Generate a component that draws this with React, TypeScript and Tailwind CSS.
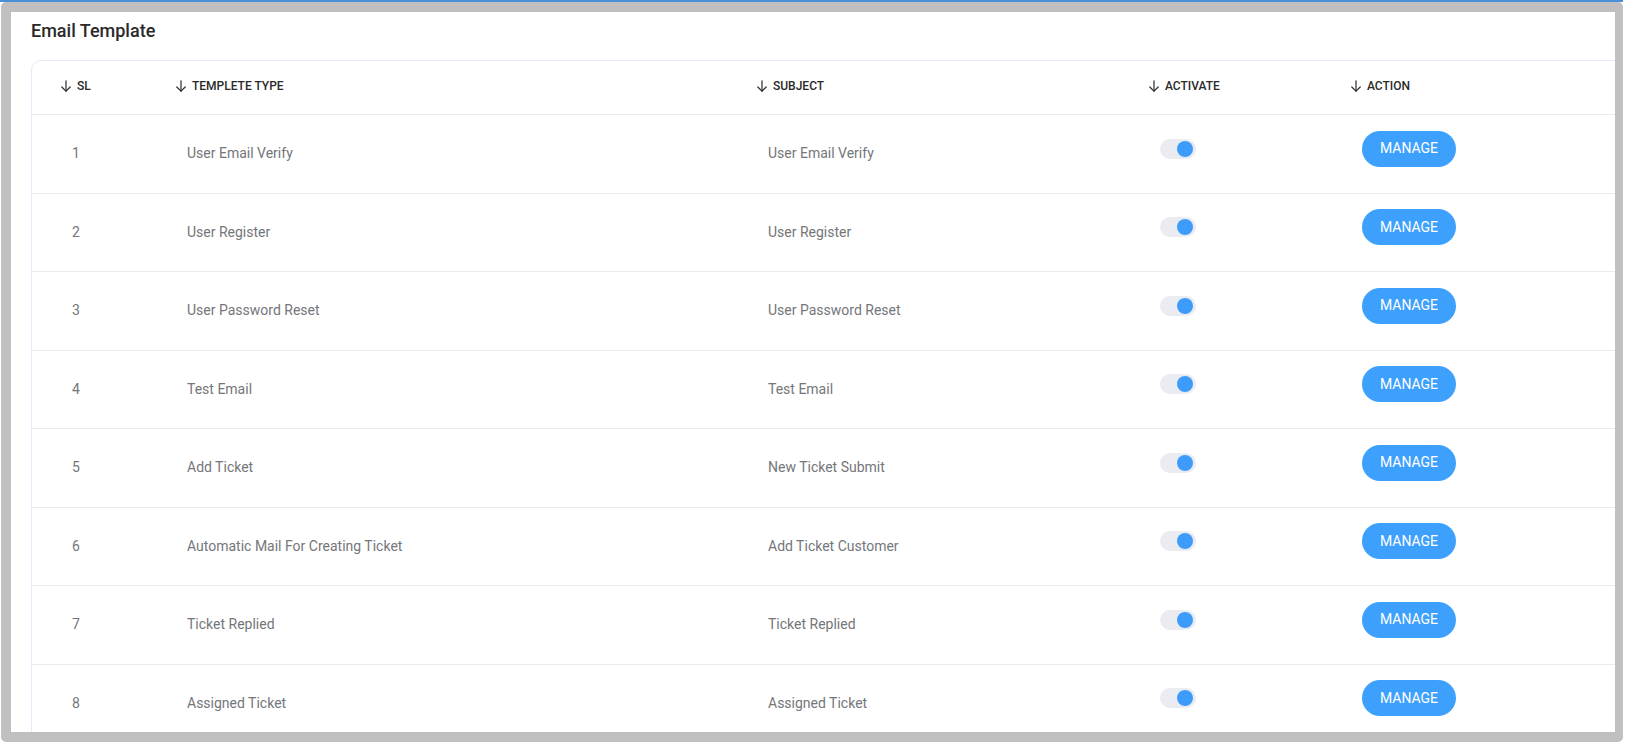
import React from 'react'

const rows = [
  { type: 'User Email Verify', subject: 'User Email Verify' },
  { type: 'User Register', subject: 'User Register' },
  { type: 'User Password Reset', subject: 'User Password Reset' },
  { type: 'Test Email', subject: 'Test Email' },
  { type: 'Add Ticket', subject: 'New Ticket Submit' },
  { type: 'Automatic Mail For Creating Ticket', subject: 'Add Ticket Customer' },
  { type: 'Ticket Replied', subject: 'Ticket Replied' },
  { type: 'Assigned Ticket', subject: 'Assigned Ticket' },
]

const cols = 'grid grid-cols-[115px_581px_392px_202px_1fr]'

function SortArrow() {
  return (
    <svg width="10" height="12" viewBox="0 0 10 12" fill="none" stroke="#2b2b2b" strokeWidth="1.2" strokeLinecap="round" strokeLinejoin="round">
      <path d="M5 0.8V11.2" />
      <path d="M0.8 7L5 11.2L9.2 7" />
    </svg>
  )
}

function HeadCell({ label }: { label: string }) {
  return (
    <div className="flex items-center gap-[6px]">
      <SortArrow />
      <span className="text-[12px] font-medium uppercase leading-none text-[#2a2a2a]">{label}</span>
    </div>
  )
}

function Toggle() {
  return (
    <div className="mb-[10px] flex h-5 w-9 items-center justify-end rounded-full bg-[#eaecf1] pr-[3px]">
      <span className="h-4 w-4 rounded-full bg-[#3d9cfb]" />
    </div>
  )
}

export default function App() {
  return (
    <div className="relative h-[744px] w-[1626px] overflow-hidden bg-white font-[Roboto,sans-serif]">
      <div className="h-[2px] w-[1623px] bg-[#4a90d9]" />
      <div className="ml-px flex h-[740px] w-[1622px] flex-col overflow-hidden rounded-[5px] border-[10px] border-r-[8px] border-[#c0c0c0] bg-white">
        <div className="px-5 pt-[5px]">
          <h1 className="text-[18px] font-medium leading-7 text-[#2a2a2a]">Email Template</h1>
          <div className="mt-[15px] w-[1620px] rounded-[10px] border border-[#e3ecf6] bg-white">
            <div className={`${cols} h-[54px] items-center border-b border-[#eaeaea] pb-1 pl-[29px]`}>
              <HeadCell label="SL" />
              <HeadCell label="Templete Type" />
              <HeadCell label="Subject" />
              <HeadCell label="Activate" />
              <HeadCell label="Action" />
            </div>
            {rows.map((r, i) => (
              <div
                key={i}
                className={`${cols} h-[78.5px] items-center border-b border-[#ebebeb] pl-[40px] text-[14px] text-[#74767a]`}
              >
                <div>{i + 1}</div>
                <div>{r.type}</div>
                <div>{r.subject}</div>
                <div>
                  <Toggle />
                </div>
                <div>
                  <button className="mb-[10px] h-9 w-[94px] rounded-full bg-[#3ea0fd] text-[14px] uppercase text-white">
                    Manage
                  </button>
                </div>
              </div>
            ))}
          </div>
        </div>
      </div>
    </div>
  )
}
